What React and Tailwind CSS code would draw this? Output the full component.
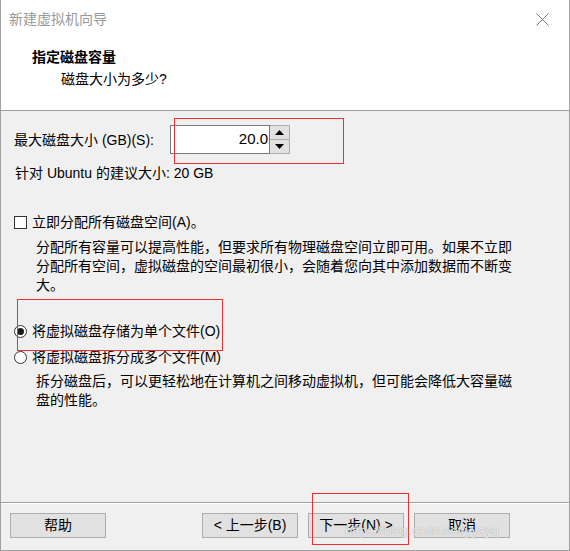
import { useState } from "react";

const font = "font-['Liberation_Sans','Noto_Sans_CJK_SC',sans-serif]";

function Radio({ checked }) {
  return (
    <span className="w-[13px] h-[13px] rounded-full border border-[#333] bg-white flex items-center justify-center shrink-0">
      {checked && <span className="w-[7px] h-[7px] rounded-full bg-[#1a1a1a]" />}
    </span>
  );
}

function Btn({ children }) {
  return (
    <button className="w-[96px] h-[25px] bg-[#e1e1e1] border border-[#adadad] text-[14px] text-black flex items-center justify-center">
      {children}
    </button>
  );
}

function Tri({ up }) {
  return (
    <svg width="9" height="5" viewBox="0 0 9 5">
      {up ? <path d="M0 5 L4.5 0 L9 5 Z" fill="#000" /> : <path d="M0 0 L4.5 5 L9 0 Z" fill="#000" />}
    </svg>
  );
}

export default function App() {
  const [size] = useState("20.0");
  const [mode] = useState("single");

  return (
    <div className={`relative w-[570px] h-[551px] bg-[#f0f0f0] border-x border-b border-[#a0a0a0] flex flex-col text-[14px] text-black ${font}`}>
      {/* header */}
      <div className="bg-white h-[111px] border-b border-[#a0a0a0] flex flex-col">
        <div className="h-[38px] flex items-center justify-between pl-[8px] pr-[20px]">
          <span className="text-[#999] text-[14px]">新建虚拟机向导</span>
          <svg width="13" height="13" viewBox="0 0 13 13">
            <path d="M0.5 0.5 L12.5 12.5 M12.5 0.5 L0.5 12.5" stroke="#777" strokeWidth="1" />
          </svg>
        </div>
        <div className="pl-[31px] mt-[9px] leading-[20px] font-bold">指定磁盘容量</div>
        <div className="pl-[60px] mt-[2px] leading-[20px]">磁盘大小为多少?</div>
      </div>

      {/* body */}
      <div className="flex-1 flex flex-col pl-[13px]">
        <div className="flex items-center mt-[14px] h-[29px]">
          <span className="w-[156px] leading-[20px]">最大磁盘大小 (GB)(S):</span>
          <div className="flex h-[29px]">
            <div className="w-[100px] h-full bg-white border border-[#7a7a7a] flex items-center justify-end pr-[1px] text-[15px]">
              {size}
            </div>
            <div className="flex flex-col w-[20px] h-full border border-l-0 border-[#adadad]">
              <div className="flex-1 bg-[#e1e1e1] border-b border-[#adadad] flex items-center justify-center">
                <Tri up />
              </div>
              <div className="flex-1 bg-[#e1e1e1] flex items-center justify-center">
                <Tri />
              </div>
            </div>
          </div>
        </div>
        <div className="mt-[9px] leading-[20px] pl-[1px]">针对 Ubuntu 的建议大小: 20 GB</div>

        <div className="flex items-center mt-[29px] h-[20px] gap-[5px]">
          <span className="w-[13px] h-[13px] border border-[#333] bg-white shrink-0" />
          <span>立即分配所有磁盘空间(A)。</span>
        </div>
        <div className="pl-[22px] mt-[6px] leading-[19px]">
          <div>分配所有容量可以提高性能，但要求所有物理磁盘空间立即可用。如果不立即</div>
          <div>分配所有空间，虚拟磁盘的空间最初很小，会随着您向其中添加数据而不断变</div>
          <div>大。</div>
        </div>

        <div className="flex items-center mt-[23px] h-[26px] gap-[5px]">
          <Radio checked={mode === "single"} />
          <span>将虚拟磁盘存储为单个文件(O)</span>
        </div>
        <div className="flex items-center h-[26px] gap-[5px]">
          <Radio checked={mode === "split"} />
          <span>将虚拟磁盘拆分成多个文件(M)</span>
        </div>
        <div className="pl-[22px] mt-[2px] leading-[19px]">
          <div>拆分磁盘后，可以更轻松地在计算机之间移动虚拟机，但可能会降低大容量磁</div>
          <div>盘的性能。</div>
        </div>
      </div>

      {/* footer */}
      <div className="h-[48px] border-t border-[#a0a0a0] shadow-[inset_0_1px_0_#fff] flex items-start pt-[10px] pl-[9px]">
        <Btn>帮助</Btn>
        <div className="ml-[96px] flex gap-[10px]">
          <Btn>&lt; 上一步(B)</Btn>
          <Btn>下一步(N) &gt;</Btn>
          <Btn>取消</Btn>
        </div>
      </div>

      {/* annotations */}
      <div className="absolute left-[173px] top-[118px] w-[170px] h-[46px] border border-[#f03030] pointer-events-none" />
      <div className="absolute left-[16px] top-[299px] w-[206px] h-[52px] border border-[#f03030] pointer-events-none" />
      <div className="absolute left-[311px] top-[493px] w-[97px] h-[52px] border border-[#f03030] pointer-events-none" />
      <div className="absolute left-[344px] top-[521px] text-[13px] text-white/80 [text-shadow:0_0_1px_#888] font-['Liberation_Sans',sans-serif] pointer-events-none">
        https://blog.csdn.net/yyayq
      </div>
    </div>
  );
}
